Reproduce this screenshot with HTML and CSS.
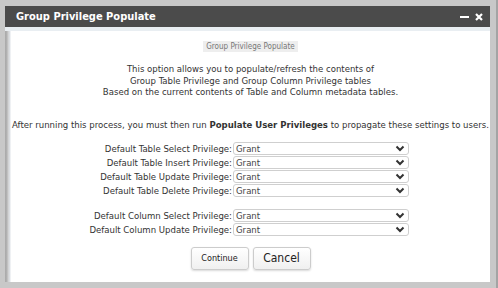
FILE: index.html
```html
<!doctype html>
<html lang="en">
<head>
    <meta charset="UTF-8">
    <title>Group Privilege Populate</title>
    <link rel="stylesheet" href="styles.css">
</head>
<body>
    <div class="dialog">
        <div class="titlebar">
            <span class="title">Group Privilege Populate</span>
            <span class="controls">
                <svg width="9" height="9" viewBox="0 0 9 9"><rect x="0" y="4" width="9" height="2" fill="#fff"/></svg>
                <svg width="8" height="8" viewBox="0 0 8 8"><path d="M1 1L7 7M7 1L1 7" stroke="#fff" stroke-width="2.2"/></svg>
            </span>
        </div>
        <div class="content">
            <div class="tagrow"><span class="tag">Group Privilege Populate</span></div>
            <p class="intro">This option allows you to populate/refresh the contents of<br>Group Table Privilege and Group Column Privilege tables<br>Based on the current contents of Table and Column metadata tables.</p>
            <p class="note">After running this process, you must then run <b>Populate User Privileges</b> to propagate these settings to users.</p>
            <div class="form">
                <label>Default Table Select Privilege:</label>
                <div class="select"><span>Grant</span><svg width="10" height="7" viewBox="0 0 10 7"><path d="M1.5 1.5L5 5L8.5 1.5" fill="none" stroke="#333" stroke-width="2"/></svg></div>
                <label>Default Table Insert Privilege:</label>
                <div class="select"><span>Grant</span><svg width="10" height="7" viewBox="0 0 10 7"><path d="M1.5 1.5L5 5L8.5 1.5" fill="none" stroke="#333" stroke-width="2"/></svg></div>
                <label>Default Table Update Privilege:</label>
                <div class="select"><span>Grant</span><svg width="10" height="7" viewBox="0 0 10 7"><path d="M1.5 1.5L5 5L8.5 1.5" fill="none" stroke="#333" stroke-width="2"/></svg></div>
                <label>Default Table Delete Privilege:</label>
                <div class="select"><span>Grant</span><svg width="10" height="7" viewBox="0 0 10 7"><path d="M1.5 1.5L5 5L8.5 1.5" fill="none" stroke="#333" stroke-width="2"/></svg></div>
            </div>
            <div class="form second">
                <label>Default Column Select Privilege:</label>
                <div class="select"><span>Grant</span><svg width="10" height="7" viewBox="0 0 10 7"><path d="M1.5 1.5L5 5L8.5 1.5" fill="none" stroke="#333" stroke-width="2"/></svg></div>
                <label>Default Column Update Privilege:</label>
                <div class="select"><span>Grant</span><svg width="10" height="7" viewBox="0 0 10 7"><path d="M1.5 1.5L5 5L8.5 1.5" fill="none" stroke="#333" stroke-width="2"/></svg></div>
            </div>
            <div class="buttons">
                <button class="btn small">Continue</button>
                <button class="btn">Cancel</button>
            </div>
        </div>
    </div>
</body>
</html>
```

FILE: styles.css
```css
*{
    margin: 0;
    padding: 0;
    box-sizing: border-box;
}
html,body{
    height:100%;
}
body{
    background:#c8c8c8;
    box-shadow:inset -2px 0 0 #a4a4a4;
    font-family:"DejaVu Sans Condensed","DejaVu Sans",sans-serif;
    font-size:9.5px;
    color:#333;
    padding:6px 0 0 5px;
}
.dialog{
    width:485px;
    height:276px;
    background:#fff;
    display:flex;
    flex-direction:column;
}
.titlebar{
    height:21px;
    background:#4b4b4b;
    display:flex;
    align-items:center;
    justify-content:space-between;
    padding:0 7px 0 11px;
}
.title{
    color:#fff;
    font-weight:bold;
    font-size:11px;
}
.controls{
    display:flex;
    align-items:center;
    gap:6px;
}
.content{
    flex:1;
    border-top:4px solid #e9eef2;
    background:linear-gradient(to right,#a9a9a9 0,#b3b3b3 2px,#cfcfcf 3px,#dfe3e8 5px,#fff 6px);
    padding-left:6px;
    text-align:center;
}
.tagrow{
    padding-top:9px;
    height:19px;
}
.tag{
    display:inline-block;
    background:#eeeeee;
    color:#777;
    font-size:8px;
    padding:1px 3px;
}
.intro{
    margin-top:13px;
    line-height:11.5px;
}
.note{
    margin-top:21px;
    line-height:11px;
    white-space:nowrap;
}
.form{
    display:grid;
    grid-template-columns:222px 176px;
    row-gap:1px;
    margin-top:12px;
}
.form.second{
    margin-top:12px;
}
.form label{
    text-align:right;
    line-height:13px;
    padding-right:1px;
}
.select{
    display:flex;
    align-items:center;
    justify-content:space-between;
    height:13px;
    border:1px solid #cfcfcf;
    border-radius:3px;
    padding:0 3px 0 2px;
    color:#444;
    text-align:left;
}
.buttons{
    display:flex;
    justify-content:center;
    gap:4px;
    margin-top:11px;
}
.btn{
    width:58px;
    height:23px;
    border:1px solid #ccc;
    border-radius:3px;
    background:linear-gradient(#fff,#f0f0f0);
    box-shadow:0 1px 2px rgba(0,0,0,.15);
    font-family:"DejaVu Sans Condensed","DejaVu Sans",sans-serif;
    font-size:12px;
    color:#222;
}
.btn.small{
    font-size:9px;
}
```
